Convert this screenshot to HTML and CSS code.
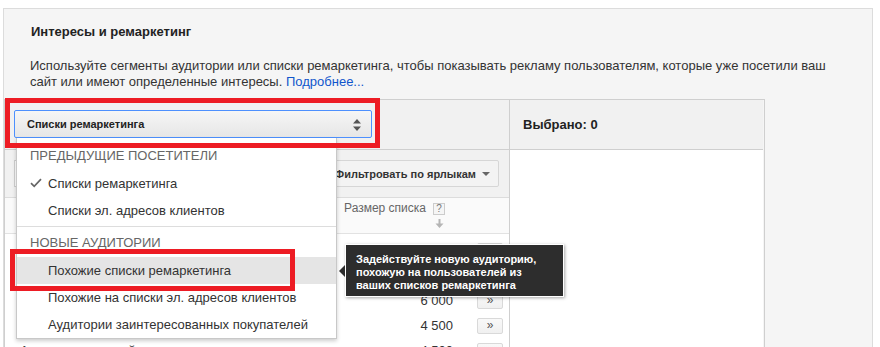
FILE: index.html
```html
<!DOCTYPE html>
<html lang="ru">
<head>
    <meta charset="UTF-8">
    <meta name="viewport" content="width=device-width, initial-scale=1.0">
    <title>Интересы и ремаркетинг</title>
    <link rel="stylesheet" href="styles.css">
</head>
<body>
    <div class="panel">
        <h2 class="panel-title">Интересы и ремаркетинг</h2>
        <p class="panel-desc">Используйте сегменты аудитории или списки ремаркетинга, чтобы показывать рекламу пользователям, которые уже посетили ваш сайт или имеют определенные интересы. <a href="#">Подробнее...</a></p>

        <div class="picker">
            <div class="picker-left">
                <div class="picker-head">
                    <div class="select-wrap">
                        <div class="select">
                            <span>Списки ремаркетинга</span>
                            <svg class="select-arrows" width="8" height="12" viewBox="0 0 8 12">
                                <path d="M4 0 L8 4.5 L0 4.5 Z M0 7.5 L8 7.5 L4 12 Z" fill="#555"/>
                            </svg>
                        </div>

                        <ul class="menu">
                            <li class="menu-title">Предыдущие посетители</li>
                            <li class="menu-item">
                                <svg class="check" width="12" height="10" viewBox="0 0 12 10">
                                    <path d="M1 5.2 L4.2 8.4 L11 1.2" fill="none" stroke="#666" stroke-width="1.7"/>
                                </svg>
                                Списки ремаркетинга
                            </li>
                            <li class="menu-item">Списки эл. адресов клиентов</li>
                            <li class="menu-divider"></li>
                            <li class="menu-title">Новые аудитории</li>
                            <li class="menu-item hover">
                                Похожие списки ремаркетинга
                                <div class="highlight highlight-item"></div>
                                <div class="tooltip">Задействуйте новую аудиторию,<br>похожую на пользователей из<br>ваших списков ремаркетинга</div>
                            </li>
                            <li class="menu-item">Похожие на списки эл. адресов клиентов</li>
                            <li class="menu-item">Аудитории заинтересованных покупателей</li>
                        </ul>

                        <div class="highlight highlight-select"></div>
                    </div>
                </div>

                <div class="toolbar">
                    <div class="search"></div>
                    <div class="filter-btn">
                        Фильтровать по ярлыкам
                        <span class="caret"></span>
                    </div>
                </div>

                <div class="col-head">
                    <div class="col-size">
                        <div class="col-size-label">Размер списка <span class="help">?</span></div>
                        <svg class="sort" width="9" height="9" viewBox="0 0 9 9">
                            <path d="M3.5 0 H5.5 V4.5 H8.5 L4.5 9 L0.5 4.5 H3.5 Z" fill="#b5b5b5"/>
                        </svg>
                    </div>
                </div>

                <div class="rows">
                    <div class="row"><span class="row-name">Посетители сайта</span><span class="row-size">15 000</span><span class="add-btn">»</span></div>
                    <div class="row"><span class="row-name">Все посетители</span><span class="row-size">7 500</span><span class="add-btn">»</span></div>
                    <div class="row"><span class="row-name">Покупатели</span><span class="row-size">6 000</span><span class="add-btn">»</span></div>
                    <div class="row"><span class="row-name">Корзина</span><span class="row-size">4 500</span><span class="add-btn">»</span></div>
                    <div class="row"><span class="row-name">Аудитория главной страницы</span><span class="row-size">4 500</span><span class="add-btn">»</span></div>
                </div>
            </div>

            <div class="picker-right">
                <div class="picker-head selected-head">Выбрано: 0</div>
                <div class="selected-body"></div>
            </div>
        </div>
    </div>
</body>
</html>
```

FILE: styles.css
```css
* {
    margin: 0;
    padding: 0;
    box-sizing: border-box;
    font-family: 'Liberation Sans', Arial, sans-serif;
}

body {
    background-color: #fff;
    height: 347px;
    overflow: hidden;
    color: #333;
}

.panel {
    margin: 8px 7px 0 3px;
    background-color: #f5f5f5;
    border: 1px solid #dcdcdc;
    height: 400px;
}

.panel-title {
    font-size: 13px;
    line-height: 16px;
    font-weight: bold;
    color: #222;
    padding: 15px 0 0 27px;
}

.panel-desc {
    font-size: 13px;
    line-height: 16px;
    color: #333;
    margin-top: 18px;
    padding: 0 28px 0 26px;
}

.panel-desc a {
    color: #15c;
    text-decoration: none;
}

/* picker table */
.picker {
    display: flex;
    margin-top: 9px;
    width: 761px;
    border: 1px solid #cfcfcf;
    border-right-color: #cfcfcf;
    height: 300px;
}

.picker-left {
    width: 504px;
    background-color: #fff;
}

.picker-right {
    width: 254px;
    border-left: 1px solid #cfcfcf;
    background-color: #fff;
}

.picker-head {
    height: 50px;
    background-color: #f1f1f1;
    border-bottom: 1px solid #cfcfcf;
    padding-top: 10px;
}

.selected-head {
    display: flex;
    align-items: center;
    padding: 0 0 0 13px;
    font-size: 13px;
    font-weight: bold;
    color: #222;
}

/* select */
.select-wrap {
    position: relative;
    margin-left: 9px;
    width: 358px;
}

.select {
    height: 28px;
    border: 1px solid #4d90fe;
    border-radius: 2px;
    background: linear-gradient(#f6f6f6, #e6e6e6);
    display: flex;
    align-items: center;
    justify-content: space-between;
    padding: 0 10px 0 12px;
    font-size: 11px;
    font-weight: bold;
    color: #222;
}

.select-arrows {
    margin-top: 1px;
}

.highlight {
    position: absolute;
    border: 5px solid #ed1c24;
    z-index: 5;
}

.highlight-select {
    left: -9px;
    top: -12px;
    width: 375px;
    height: 50px;
}

/* dropdown menu */
.menu {
    position: absolute;
    left: 2px;
    top: 28px;
    width: 321px;
    list-style: none;
    background-color: #fff;
    border: 1px solid #c8c8c8;
    border-top: none;
    box-shadow: 0 2px 4px rgba(0,0,0,0.2);
    padding-top: 4px;
    z-index: 4;
}

.menu-title {
    height: 28px;
    line-height: 28px;
    padding-left: 13px;
    font-size: 13px;
    color: #666;
    text-transform: uppercase;
}

.menu-item {
    position: relative;
    height: 27px;
    line-height: 27px;
    padding-left: 31px;
    font-size: 13px;
    color: #333;
}

.menu-item.hover {
    background-color: #e5e5e5;
}

.check {
    position: absolute;
    left: 13px;
    top: 8px;
}

.menu-divider {
    height: 1px;
    background-color: #ddd;
    margin: 2px 0;
}

.highlight-item {
    left: -7px;
    top: -8px;
    width: 285px;
    height: 42px;
}

.tooltip {
    position: absolute;
    left: 328px;
    top: -13px;
    width: 219px;
    padding: 8px 10px 4px;
    background-color: #2d2d2d;
    border: 1px solid #fff;
    box-shadow: 1px 1px 3px rgba(0,0,0,0.35);
    color: #fff;
    font-size: 11px;
    font-weight: bold;
    line-height: 13px;
    white-space: nowrap;
    z-index: 6;
}

.tooltip::before {
    content: '';
    position: absolute;
    left: -7px;
    top: 20px;
    border-top: 6px solid transparent;
    border-bottom: 6px solid transparent;
    border-right: 6px solid #2d2d2d;
}

/* toolbar */
.toolbar {
    height: 48px;
    background-color: #f1f1f1;
    border-bottom: 1px solid #dcdcdc;
    display: flex;
    align-items: center;
    justify-content: space-between;
    padding: 0 10px 0 9px;
}

.search {
    width: 290px;
    height: 27px;
    border: 1px solid #d0d0d0;
    background-color: #fff;
}

.filter-btn {
    height: 27px;
    border: 1px solid #d6d6d6;
    border-radius: 2px;
    background-color: #f3f3f3;
    display: flex;
    align-items: center;
    padding: 0 8px 0 10px;
    font-size: 11px;
    font-weight: bold;
    color: #333;
}

.caret {
    margin-left: 6px;
    border-left: 4px solid transparent;
    border-right: 4px solid transparent;
    border-top: 4px solid #666;
}

/* column header */
.col-head {
    height: 36px;
    background-color: #fafafa;
    border-bottom: 1px solid #e2e2e2;
    display: flex;
    justify-content: flex-end;
    padding: 4px 64px 0 0;
}

.col-size {
    display: flex;
    flex-direction: column;
    align-items: flex-end;
}

.col-size-label {
    display: flex;
    align-items: center;
    font-size: 12px;
    line-height: 13px;
    color: #666;
}

.help {
    display: inline-block;
    width: 12px;
    height: 12px;
    margin-left: 7px;
    border: 1px solid #ccc;
    background-color: #f5f5f5;
    font-size: 10px;
    line-height: 10px;
    text-align: center;
    color: #777;
}

.sort {
    margin: 4px 1px 0 0;
}

/* rows */
.rows {
    padding-top: 4px;
}

.row {
    height: 25px;
    display: flex;
    align-items: center;
    padding: 0 6px 0 15px;
    font-size: 13px;
    color: #333;
}

.row-name {
    flex: 1;
}

.row-size {
    width: 80px;
    text-align: right;
}

.add-btn {
    width: 26px;
    height: 16px;
    margin-left: 24px;
    border: 1px solid #d9d9d9;
    border-radius: 2px;
    background: linear-gradient(#f9f9f9, #f0f0f0);
    font-size: 12px;
    line-height: 13px;
    text-align: center;
    color: #555;
}

.selected-body {
    height: 250px;
    background-color: #fff;
}
```
